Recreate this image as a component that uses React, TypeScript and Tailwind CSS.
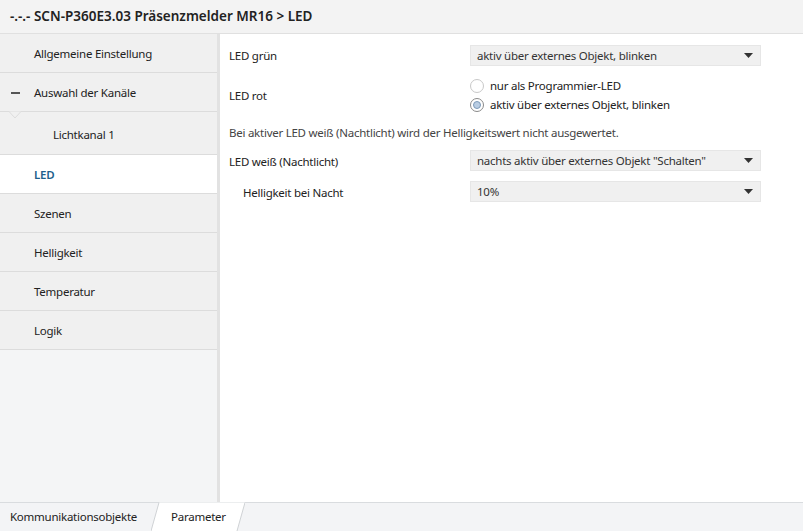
import React from 'react';

const font = { fontFamily: '"Segoe UI", "Noto Sans", "Open Sans", sans-serif' };

interface NavItem {
  label: string;
  indent?: boolean;
  active?: boolean;
  minus?: boolean;
  notch?: boolean;
  tall?: boolean;
}

const navItems: NavItem[] = [
  { label: 'Allgemeine Einstellung' },
  { label: 'Auswahl der Kanäle', minus: true },
  { label: 'Lichtkanal 1', indent: true, notch: true, tall: true },
  { label: 'LED', active: true },
  { label: 'Szenen' },
  { label: 'Helligkeit' },
  { label: 'Temperatur' },
  { label: 'Logik' },
];

function Caret() {
  return (
    <svg width="9" height="5" viewBox="0 0 9 5" className="shrink-0">
      <path d="M0 0 L9 0 L4.5 5 Z" fill="#333" />
    </svg>
  );
}

function Select({ value }: { value: string }) {
  return (
    <div className="flex items-center justify-between h-[21px] w-[291px] pl-[6px] pr-[7px] bg-[#f0f0f0] border border-[#e6e6e6] text-[#333]">
      <span className="pt-[1px]">{value}</span>
      <Caret />
    </div>
  );
}

function Radio({ checked, label }: { checked?: boolean; label: string }) {
  return (
    <div className="flex items-center gap-[6px] h-[19px]">
      <span
        className={
          checked
            ? 'flex items-center justify-center w-[14px] h-[14px] rounded-full border border-[#8a8a8a] bg-white'
            : 'w-[14px] h-[14px] rounded-full border border-[#c8c8c8] bg-white'
        }
      >
        {checked && (
          <span className="w-[8px] h-[8px] rounded-full bg-[#b9cde3] border border-[#7d9ab8]" />
        )}
      </span>
      <span className="text-[#222] pt-[1px]">{label}</span>
    </div>
  );
}

function Sidebar() {
  return (
    <div className="flex w-[220px] shrink-0">
      <div className="flex flex-col w-[217px] bg-[#f4f5f6]">
        {navItems.map((item) => (
          <div
            key={item.label}
            className={
              'relative flex items-center border-b border-[#dcdcdc] ' +
              (item.tall ? 'h-[43px] pt-[3px] ' : 'h-[39px] pt-[2px] ') +
              (item.active ? 'bg-white text-[#1e5f8c] font-semibold' : 'bg-[#f0f0f0] text-[#222]')
            }
          >
            {item.notch && (
              <svg width="24" height="9" viewBox="0 0 24 9" className="absolute -top-[1px] left-[3px]">
                <path d="M0 0.5 L6 0.5 L12 7 L18 0.5 L24 0.5" fill="#f0f0f0" stroke="#dcdcdc" strokeWidth="1" />
              </svg>
            )}
            {item.minus && <span className="absolute left-[11px] top-[19px] w-[9px] h-[1.5px] bg-[#555]" />}
            <span className={item.indent ? 'pl-[53px]' : 'pl-[34px]'}>{item.label}</span>
          </div>
        ))}
      </div>
      <div className="w-[3px] bg-[#e2e2e2]" />
    </div>
  );
}

function Content() {
  return (
    <div className="flex-1 flex flex-col pl-[9px] pt-[11px] text-[#222]">
      <div className="flex items-center h-[21px]">
        <span className="w-[241px] pt-[1px]">LED grün</span>
        <Select value="aktiv über externes Objekt, blinken" />
      </div>
      <div className="flex items-center mt-[10px] h-[38px]">
        <span className="w-[241px] pt-[2px]">LED rot</span>
        <div className="flex flex-col">
          <Radio label="nur als Programmier-LED" />
          <Radio checked label="aktiv über externes Objekt, blinken" />
        </div>
      </div>
      <div className="mt-[9px] h-[20px] flex items-center text-[#444]">
        Bei aktiver LED weiß (Nachtlicht) wird der Helligkeitswert nicht ausgewertet.
      </div>
      <div className="flex items-center mt-[7px] h-[21px]">
        <span className="w-[241px] pt-[2px]">LED weiß (Nachtlicht)</span>
        <Select value={'nachts aktiv über externes Objekt "Schalten"'} />
      </div>
      <div className="flex items-center mt-[10px] h-[21px]">
        <span className="w-[241px] pl-[14px] pt-[2px]">Helligkeit bei Nacht</span>
        <Select value="10%" />
      </div>
    </div>
  );
}

function Footer() {
  return (
    <div className="flex items-end h-[29px] bg-[#f3f4f6] border-t border-[#d9dcdf] text-[#222]">
      <div className="h-[28px] flex items-center pl-[10px] pr-[14px]">Kommunikationsobjekte</div>
      <div className="relative h-[28px] w-[94px] flex items-center">
        <svg width="94" height="29" viewBox="0 0 94 29" className="absolute -top-[1px] left-0">
          <path d="M0 29 L8 0.5 L94 0.5 L86 29 Z" fill="#ffffff" />
          <path d="M0 29 L8 0.5 M86 29 L94 0.5" stroke="#cfd2d5" strokeWidth="1" fill="none" />
        </svg>
        <span className="relative pl-[20px]">Parameter</span>
      </div>
    </div>
  );
}

export default function App() {
  return (
    <div
      className="w-[803px] h-[531px] flex flex-col bg-white overflow-hidden text-[11.5px] tracking-[-0.25px]"
      style={font}
    >
      <div className="h-[34px] shrink-0 flex items-center pl-[10px] bg-[#f3f3f3] border-b border-[#e0e0e0] text-[13.5px] tracking-normal font-semibold text-[#222]">
        -.-.- SCN-P360E3.03 Präsenzmelder MR16 &gt; LED
      </div>
      <div className="flex flex-1 min-h-0">
        <Sidebar />
        <Content />
      </div>
      <Footer />
    </div>
  );
}
